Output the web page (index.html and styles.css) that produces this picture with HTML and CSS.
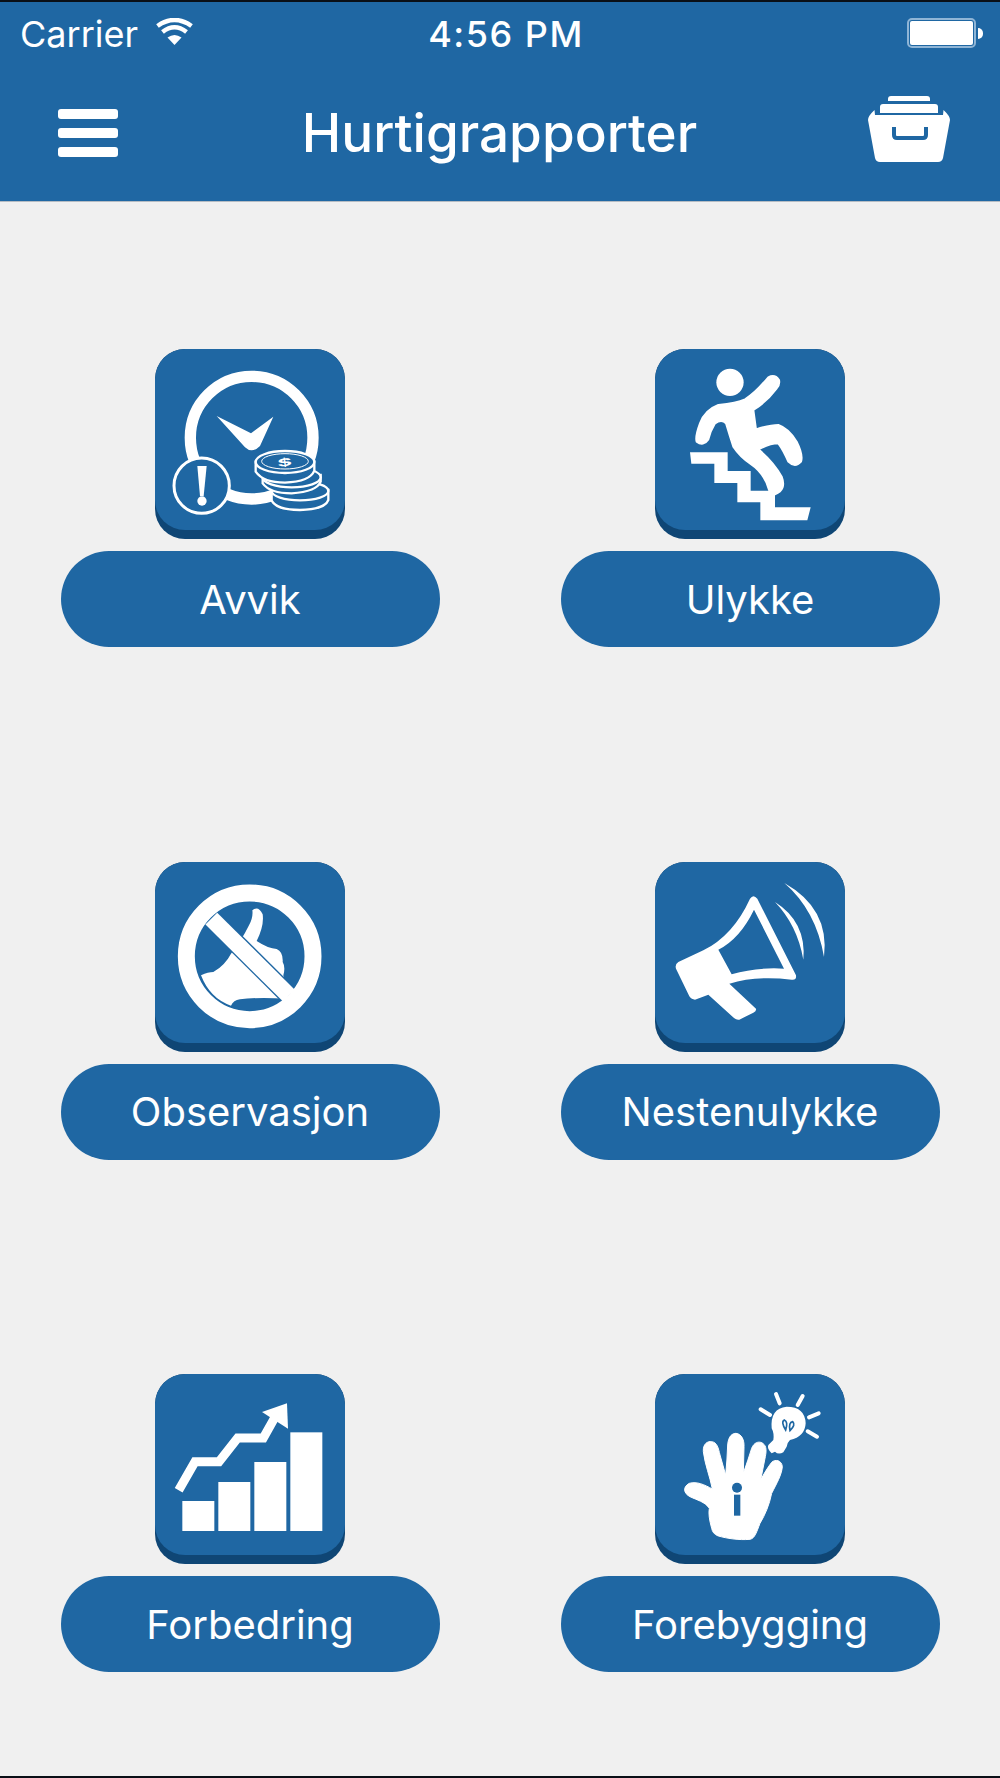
FILE: index.html
```html
<!DOCTYPE html>
<html lang="en">
<head>
    <meta charset="UTF-8">
    <meta name="viewport" content="width=device-width, initial-scale=1.0">
    <title>Hurtigrapporter</title>
    <link rel="stylesheet" href="styles.css">
</head>
<body>

<div class="screen">
    <header class="app-header">
        <div class="status-bar">
            <div class="status-left">
                <span class="carrier">Carrier</span>
                <svg class="wifi" viewBox="0 0 37 27">
                    <path d="M18.500 27 L11.500 19.500 Q18.500 14.500 25.500 19.500 Z" fill="#fff"/>
                    <path d="M6.500 14 Q18.500 4.500 30.500 14" fill="none" stroke="#fff" stroke-width="4.500"/>
                    <path d="M1.500 8 Q18.500 -4 35.500 8" fill="none" stroke="#fff" stroke-width="4.500"/>
                </svg>
            </div>
            <div class="clock">4:56 PM</div>
            <div class="battery"><div class="battery-fill"></div></div>
        </div>

        <nav class="nav-bar">
            <div class="menu-btn">
                <div class="menu-line"></div>
                <div class="menu-line"></div>
                <div class="menu-line"></div>
            </div>
            <h1 class="nav-title">Hurtigrapporter</h1>
            <svg class="archive" viewBox="0 0 82 66">
                <path d="M20 5 L20 3 Q20 0 23 0 L59 0 Q62 0 62 3 L62 5 Z" fill="#fff"/>
                <path d="M12 17 L12 11 Q12 8 15 8 L67 8 Q70 8 70 11 L70 17 Z" fill="#fff"/>
                <path d="M0 24 Q0 20 6.500 14 L7 19 L75 19 L75.500 14 Q82 20 82 24 L75 62 Q74 66 70 66 L12 66 Q8 66 7 62 Z" fill="#fff"/>
                <path d="M26 31 L26 39 Q26 42 29 42 L55 42 Q58 42 58 39 L58 31" fill="none" stroke="#1f67a3" stroke-width="4"/>
            </svg>
        </nav>
    </header>

    <main class="report-grid">
        <div class="report">
            <div class="tile">
                <svg viewBox="315 27 570 543">
                    <circle cx="605" cy="293" r="184" fill="none" stroke="#fff" stroke-width="34"/>
                    <path d="M500 228 L603 280 L670 230 L630 318 Q606 342 585 322 Z" fill="#fff"/>
                    <circle cx="455" cy="437" r="83" fill="#1f67a3" stroke="#fff" stroke-width="9"/>
                    <path d="M442 378 L470 378 L461 468 L450 468 Z" fill="#fff"/>
                    <circle cx="456" cy="483" r="14" fill="#fff"/>
                    <g fill="#1f67a3" stroke="#fff" stroke-width="7">
                        <path d="M665 452 L665 482 Q680 510 750 510 Q825 508 835 480 L835 450 Z"/>
                        <ellipse cx="750" cy="453" rx="85" ry="28"/>
                        <path d="M638 410 L638 430 Q660 460 725 460 Q800 455 812 425 L812 405 Z"/>
                        <ellipse cx="725" cy="412" rx="87" ry="30"/>
                        <path d="M617 365 L617 395 Q640 428 705 428 Q780 425 793 392 L793 365 Z"/>
                        <ellipse cx="705" cy="366" rx="88" ry="33"/>
                    </g>
                    <ellipse cx="705" cy="364" rx="70" ry="23" fill="none" stroke="#fff" stroke-width="3"/>
                    <text class="coin-sign" transform="translate(705 378) rotate(-8) scale(1.500 .7)" text-anchor="middle">$</text>
                </svg>
            </div>
            <div class="report-btn">Avvik</div>
        </div>

        <div class="report">
            <div class="tile">
                <svg viewBox="45 27 570 543">
                    <circle cx="270" cy="127" r="41" fill="#fff"/>
                    <path d="M385 112 Q405 102 417 120 Q420 135 410 145 Q380 185 340 210 L348 268 Q390 255 415 255 Q445 265 470 305 Q490 345 483 365 Q465 385 445 365 Q430 330 415 310 Q390 310 355 328 Q400 365 425 410 Q440 450 405 463 L388 452 Q375 400 330 370 Q300 350 280 320 Q270 290 258 250 Q245 235 225 250 Q210 275 205 298 Q190 320 170 305 Q165 290 180 250 Q195 210 235 195 Q290 190 315 178 Q345 160 385 112 Z" fill="#fff" stroke="#fff" stroke-width="6" stroke-linejoin="round"/>
                    <path d="M150 337 L263 337 L263 393 L332 393 L332 452 L405 452 L405 502 L512 502 L502 541 L361 541 L361 487 L292 487 L292 429 L223 429 L223 371 L154 371 Z" fill="#fff"/>
                </svg>
            </div>
            <div class="report-btn">Ulykke</div>
        </div>

        <div class="report">
            <div class="tile">
                <svg viewBox="30 35 570 543">
                    <path d="M322 180 Q340 165 353 192 Q358 225 335 272 Q370 295 395 296 Q415 305 413 335 Q422 350 415 375 L430 445 Q330 440 285 447 Q265 450 258 466 Q195 445 168 375 Q190 365 205 365 Q240 345 258 310 Q290 270 312 225 Q325 200 322 180 Z" fill="#fff"/>
                    <path d="M199 205 L431 435" stroke="#1f67a3" stroke-width="58"/>
                    <path d="M199 205 L431 435" stroke="#fff" stroke-width="50"/>
                    <circle cx="314" cy="318" r="190" fill="none" stroke="#fff" stroke-width="51"/>
                </svg>
            </div>
            <div class="report-btn">Observasjon</div>
        </div>

        <div class="report">
            <div class="tile">
                <svg viewBox="45 35 570 543">
                    <path fill-rule="evenodd" d="M115 335 L190 300 Q280 255 330 145 Q340 130 352 145 L468 375 Q470 390 455 388 Q350 375 268 400 L348 475 Q350 482 340 487 L298 508 Q290 510 282 503 L205 433 L165 448 Q155 448 148 438 L108 355 Q104 342 115 335 Z M235 298 Q300 265 342 178 L432 355 Q350 350 275 372 Z" fill="#fff"/>
                    <path d="M405 155 Q500 215 490 328 Q472 225 405 155 Z" fill="#fff"/>
                    <path d="M433 98 Q570 175 552 320 Q528 180 433 98 Z" fill="#fff"/>
                </svg>
            </div>
            <div class="report-btn">Nestenulykke</div>
        </div>

        <div class="report">
            <div class="tile">
                <svg viewBox="30 27 570 543">
                    <rect x="112" y="408" width="96" height="90" fill="#fff"/>
                    <rect x="220" y="351" width="96" height="147" fill="#fff"/>
                    <rect x="328" y="291" width="96" height="207" fill="#fff"/>
                    <rect x="436" y="202" width="96" height="296" fill="#fff"/>
                    <path d="M101 376 L150 290 L222 290 L278 219 L355 219 L388 160" fill="none" stroke="#fff" stroke-width="27"/>
                    <path d="M351 141 L426 115 L429 191 Z" fill="#fff"/>
                </svg>
            </div>
            <div class="report-btn">Forbedring</div>
        </div>

        <div class="report">
            <div class="tile">
                <svg viewBox="45 27 570 543">
                    <path d="M215 490 C208 465 205 445 208 430 C195 410 170 405 150 395 C130 385 128 365 148 355 C170 348 195 360 217 372 C210 335 195 300 190 260 C188 235 205 228 215 230 C232 232 235 250 240 270 L257 330 C260 300 262 270 263 240 C265 212 278 205 288 205 C305 207 313 225 312 245 L310 325 C318 300 328 275 335 250 C342 232 355 230 362 232 C380 238 380 255 376 275 L362 345 C372 325 385 305 395 292 C405 282 425 285 427 305 C425 330 410 355 395 385 C388 420 375 450 360 475 C350 500 345 520 330 523 C295 526 260 520 235 513 C222 508 217 500 215 490 Z" fill="#fff" stroke="#fff" stroke-width="3"/>
                    <circle cx="291" cy="368" r="15" fill="#1f67a3"/>
                    <rect x="282" y="389" width="19" height="63" fill="#1f67a3"/>
                    <path d="M395 190 Q390 130 440 125 Q495 125 497 175 Q495 215 450 225 Q440 235 440 245 L430 262 Q415 270 405 260 L395 265 Q380 250 385 240 L400 225 Q403 205 395 190 Z" fill="#fff"/>
                    <path d="M437 195 Q422 170 433 165 Q445 170 437 195 Z M450 197 Q445 172 458 170 Q468 180 450 197 Z" fill="none" stroke="#1f67a3" stroke-width="5"/>
                    <g stroke="#fff" stroke-width="12" stroke-linecap="round">
                        <path d="M408 87 L419 115"/>
                        <path d="M488 93 L473 120"/>
                        <path d="M362 133 L390 150"/>
                        <path d="M536 145 L507 157"/>
                        <path d="M531 215 L503 199"/>
                    </g>
                </svg>
            </div>
            <div class="report-btn">Forebygging</div>
        </div>
    </main>
</div>

</body>
</html>
```

FILE: styles.css
```css
body {
    margin: 0;
    font-family: 'Inter', 'Liberation Sans', sans-serif;
    background-color: #f0f0f0;
}

.screen {
    box-sizing: border-box;
    height: 1778px;
    border-top: 2px solid #0a0f16;
    border-bottom: 2px solid #0a0f16;
    overflow: hidden;
}

.app-header {
    box-sizing: border-box;
    height: 200px;
    background-color: #1f67a3;
    border-bottom: 1px solid #b5bcc3;
    color: white;
}

.status-bar {
    height: 64px;
    padding: 0 24px 0 20px;
    display: flex;
    justify-content: space-between;
    align-items: center;
    font-size: 36px;
}

.status-left {
    width: 315px;
    display: flex;
    align-items: center;
    gap: 18px;
}

.wifi {
    width: 37px;
    height: 27px;
    margin-bottom: 6px;
}

.clock {
    font-weight: 500;
    letter-spacing: 1.5px;
}

.battery {
    box-sizing: border-box;
    width: 69px;
    height: 30px;
    border: 2px solid #8fb5d6;
    border-radius: 5px;
    padding: 1px;
    position: relative;
    margin-left: 230px;
    margin-bottom: 2px;
}

.battery::after {
    content: '';
    position: absolute;
    right: -9px;
    top: 8px;
    width: 5px;
    height: 11px;
    background-color: white;
    border-radius: 0 5px 5px 0;
}

.battery-fill {
    height: 100%;
    background-color: white;
    border-radius: 2px;
}

.nav-bar {
    height: 133px;
    padding: 0 50px 0 58px;
    display: flex;
    justify-content: space-between;
    align-items: center;
}

.menu-btn {
    width: 60px;
    display: flex;
    flex-direction: column;
    gap: 9px;
}

.menu-line {
    height: 10px;
    background-color: white;
    border-radius: 3px;
}

.nav-title {
    margin: 0 0 0 13px;
    font-size: 53px;
    font-weight: 500;
}

.archive {
    width: 82px;
    height: 66px;
    margin-bottom: 8px;
}

.report-grid {
    padding: 147px 60px 0 61px;
    display: grid;
    grid-template-columns: 379px 379px;
    column-gap: 121px;
    row-gap: 214.5px;
}

.report {
    display: flex;
    flex-direction: column;
    align-items: center;
    gap: 12px;
}

.tile {
    width: 190px;
    height: 190px;
    margin-right: 1px;
    border-radius: 30px;
    background-color: #0f4675;
    overflow: hidden;
}

.tile svg {
    display: block;
    width: 190px;
    height: 181px;
    background-color: #1f67a3;
    border-radius: 30px;
}

.coin-sign {
    font-size: 44px;
    font-weight: bold;
    fill: white;
}

.report-btn {
    box-sizing: border-box;
    width: 100%;
    height: 96px;
    padding-right: 1px;
    border-radius: 48px;
    background-color: #1f67a3;
    color: white;
    font-size: 40px;
    display: flex;
    justify-content: center;
    align-items: center;
}
```
